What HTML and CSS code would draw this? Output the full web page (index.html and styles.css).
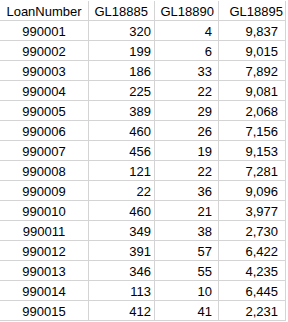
FILE: index.html
```html
<!DOCTYPE html>
<html>
<head>
<meta charset="utf-8">
<link rel="stylesheet" href="styles.css">
</head>
<body>
<div class="sheet">
  <div class="c a">LoanNumber</div><div class="c h b">GL18885</div><div class="c h cc">GL18890</div><div class="c h d">GL18895</div>
  <div class="c a">990001</div><div class="c n b">320</div><div class="c n cc">4</div><div class="c n d">9,837</div>
  <div class="c a">990002</div><div class="c n b">199</div><div class="c n cc">6</div><div class="c n d">9,015</div>
  <div class="c a">990003</div><div class="c n b">186</div><div class="c n cc">33</div><div class="c n d">7,892</div>
  <div class="c a">990004</div><div class="c n b">225</div><div class="c n cc">22</div><div class="c n d">9,081</div>
  <div class="c a">990005</div><div class="c n b">389</div><div class="c n cc">29</div><div class="c n d">2,068</div>
  <div class="c a">990006</div><div class="c n b">460</div><div class="c n cc">26</div><div class="c n d">7,156</div>
  <div class="c a">990007</div><div class="c n b">456</div><div class="c n cc">19</div><div class="c n d">9,153</div>
  <div class="c a">990008</div><div class="c n b">121</div><div class="c n cc">22</div><div class="c n d">7,281</div>
  <div class="c a">990009</div><div class="c n b">22</div><div class="c n cc">36</div><div class="c n d">9,096</div>
  <div class="c a">990010</div><div class="c n b">460</div><div class="c n cc">21</div><div class="c n d">3,977</div>
  <div class="c a">990011</div><div class="c n b">349</div><div class="c n cc">38</div><div class="c n d">2,730</div>
  <div class="c a">990012</div><div class="c n b">391</div><div class="c n cc">57</div><div class="c n d">6,422</div>
  <div class="c a">990013</div><div class="c n b">346</div><div class="c n cc">55</div><div class="c n d">4,235</div>
  <div class="c a">990014</div><div class="c n b">113</div><div class="c n cc">10</div><div class="c n d">6,445</div>
  <div class="c a">990015</div><div class="c n b">412</div><div class="c n cc">41</div><div class="c n d">2,231</div>
</div>
</body>
</html>
```
FILE: styles.css
```css
html, body {
  margin: 0;
  padding: 0;
  background: #ffffff;
}
.sheet {
  display: grid;
  grid-template-columns: 89px 66px 64px 67px;
  grid-auto-rows: 20px;
  padding-top: 1px;
  font-family: "Liberation Sans", Arial, sans-serif;
  font-size: 13px;
  color: #000;
}
.c {
  box-sizing: border-box;
  border-right: 1px solid #d4d4d4;
  border-bottom: 1px solid #d4d4d4;
  line-height: 17px;
  padding-top: 2px;
  white-space: nowrap;
  overflow: hidden;
}
.a {
  text-align: center;
}
.h, .n {
  text-align: right;
}
.h.b { padding-right: 6px; }
.h.cc { padding-right: 4px; }
.h.d { padding-right: 2px; }
.n.b { padding-right: 3px; }
.n.cc { padding-right: 6px; }
.n.d { padding-right: 7px; }
```
